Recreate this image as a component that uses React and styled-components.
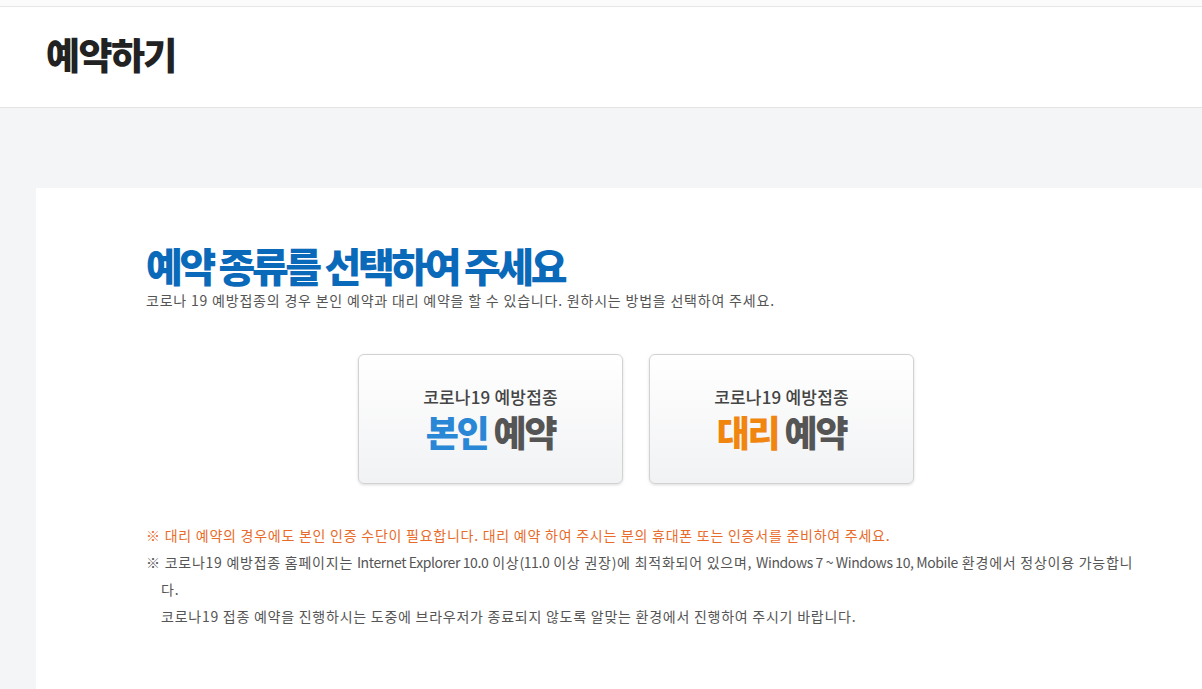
import styled, { createGlobalStyle } from 'styled-components';

// Global: ______________________________________________
const GlobalStyle = createGlobalStyle`
   body {
      margin: 0;
      background: #f4f5f7;
      font-family: 'Noto Sans CJK KR', 'Noto Sans', sans-serif;
   }
`;

// Top strip + header: _________________________________
const TopStrip = styled.div`
   height: 6px;
   background: #fbfbfb;
   border-bottom: 1px solid #e6e6e6;
`;

const Header = styled.header`
   height: 100px;
   background: #ffffff;
   border-bottom: 1px solid #e4e4e4;
   display: flex;
   align-items: center;
   padding-left: 46px;
`;

const PageTitle = styled.h1`
   margin: 0;
   font-size: 37px;
   font-weight: 900;
   letter-spacing: -1.6px;
   color: #222222;
   line-height: 1;
   transform: translateY(-3px);
`;

// Body area: __________________________________________
const Main = styled.main`
   padding: 80px 0 0 36px;
`;

const Panel = styled.section`
   background: #ffffff;
   padding: 55px 0 60px 110px;
   min-height: 440px;
`;

const Heading = styled.h2`
   margin: 0 0 3px;
   font-size: 40px;
   font-weight: 900;
   letter-spacing: -3.4px;
   line-height: 44px;
   color: #0b69b9;
`;

const Lead = styled.p`
   margin: 0;
   font-size: 14px;
   color: #555555;
   line-height: 20px;
   letter-spacing: 0.8px;
`;

// Choice buttons: _____________________________________
const ChoiceRow = styled.div`
   display: flex;
   gap: 26px;
   margin: 44px 0 0 212px;
`;

const ChoiceButton = styled.button`
   width: 265px;
   height: 130px;
   border: 1px solid #d2d2d2;
   border-radius: 6px;
   background: linear-gradient(#ffffff, #f1f2f4);
   box-shadow: 0 1px 3px rgba(0, 0, 0, 0.14);
   display: flex;
   flex-direction: column;
   align-items: center;
   justify-content: center;
   cursor: pointer;
   font-family: inherit;
   padding: 0;
`;

const ChoiceSub = styled.span`
   font-size: 17px;
   font-weight: 500;
   color: #444444;
   letter-spacing: 0.2px;
   line-height: 24px;
`;

const ChoiceMain = styled.span`
   font-size: 36px;
   font-weight: 900;
   letter-spacing: -2.2px;
   line-height: 44px;
   color: #555555;
   margin-top: 0;
`;

const Accent = styled.span`
   color: ${({ $tone }) => ($tone === 'orange' ? '#f0860f' : '#2a87d6')};
`;

// Notes: ______________________________________________
const Notes = styled.ul`
   list-style: none;
   margin: 38px 0 0;
   padding: 0;
`;

const Note = styled.li`
   font-size: 14px;
   line-height: 27px;
   letter-spacing: 0.75px;
   padding-left: 15px;
   text-indent: -15px;
   white-space: nowrap;
   color: ${({ $warn }) => ($warn ? '#e86b2a' : '#555555')};
`;

// Latin words in the notes run narrower than the Hangul:
const Latin = styled.span`
   letter-spacing: -0.4px;
`;

// _______________________________________

const App = () => {
   return (
      <>
         <GlobalStyle />
         <TopStrip />
         <Header>
            <PageTitle>예약하기</PageTitle>
         </Header>
         <Main>
            <Panel>
               <Heading>예약 종류를 선택하여 주세요</Heading>
               <Lead>
                  코로나 19 예방접종의 경우 본인 예약과 대리 예약을 할 수
                  있습니다. 원하시는 방법을 선택하여 주세요.
               </Lead>
               <ChoiceRow>
                  <ChoiceButton type="button">
                     <ChoiceSub>코로나19 예방접종</ChoiceSub>
                     <ChoiceMain>
                        <Accent>본인</Accent> 예약
                     </ChoiceMain>
                  </ChoiceButton>
                  <ChoiceButton type="button">
                     <ChoiceSub>코로나19 예방접종</ChoiceSub>
                     <ChoiceMain>
                        <Accent $tone="orange">대리</Accent> 예약
                     </ChoiceMain>
                  </ChoiceButton>
               </ChoiceRow>
               <Notes>
                  <Note $warn>
                     ※ 대리 예약의 경우에도 본인 인증 수단이 필요합니다. 대리
                     예약 하여 주시는 분의 휴대폰 또는 인증서를 준비하여 주세요.
                  </Note>
                  <Note>
                     ※ 코로나19 예방접종 홈페이지는{' '}
                     <Latin>Internet Explorer 10.0</Latin> 이상
                     <Latin>(11.0</Latin> 이상 권장)에 최적화되어 있으며,{' '}
                     <Latin>Windows 7 ~ Windows 10, Mobile</Latin> 환경에서
                     정상이용 가능합니
                     <br />
                     다.
                     <br />
                     코로나19 접종 예약을 진행하시는 도중에 브라우저가 종료되지
                     않도록 알맞는 환경에서 진행하여 주시기 바랍니다.
                  </Note>
               </Notes>
            </Panel>
         </Main>
      </>
   );
};

export default App;
